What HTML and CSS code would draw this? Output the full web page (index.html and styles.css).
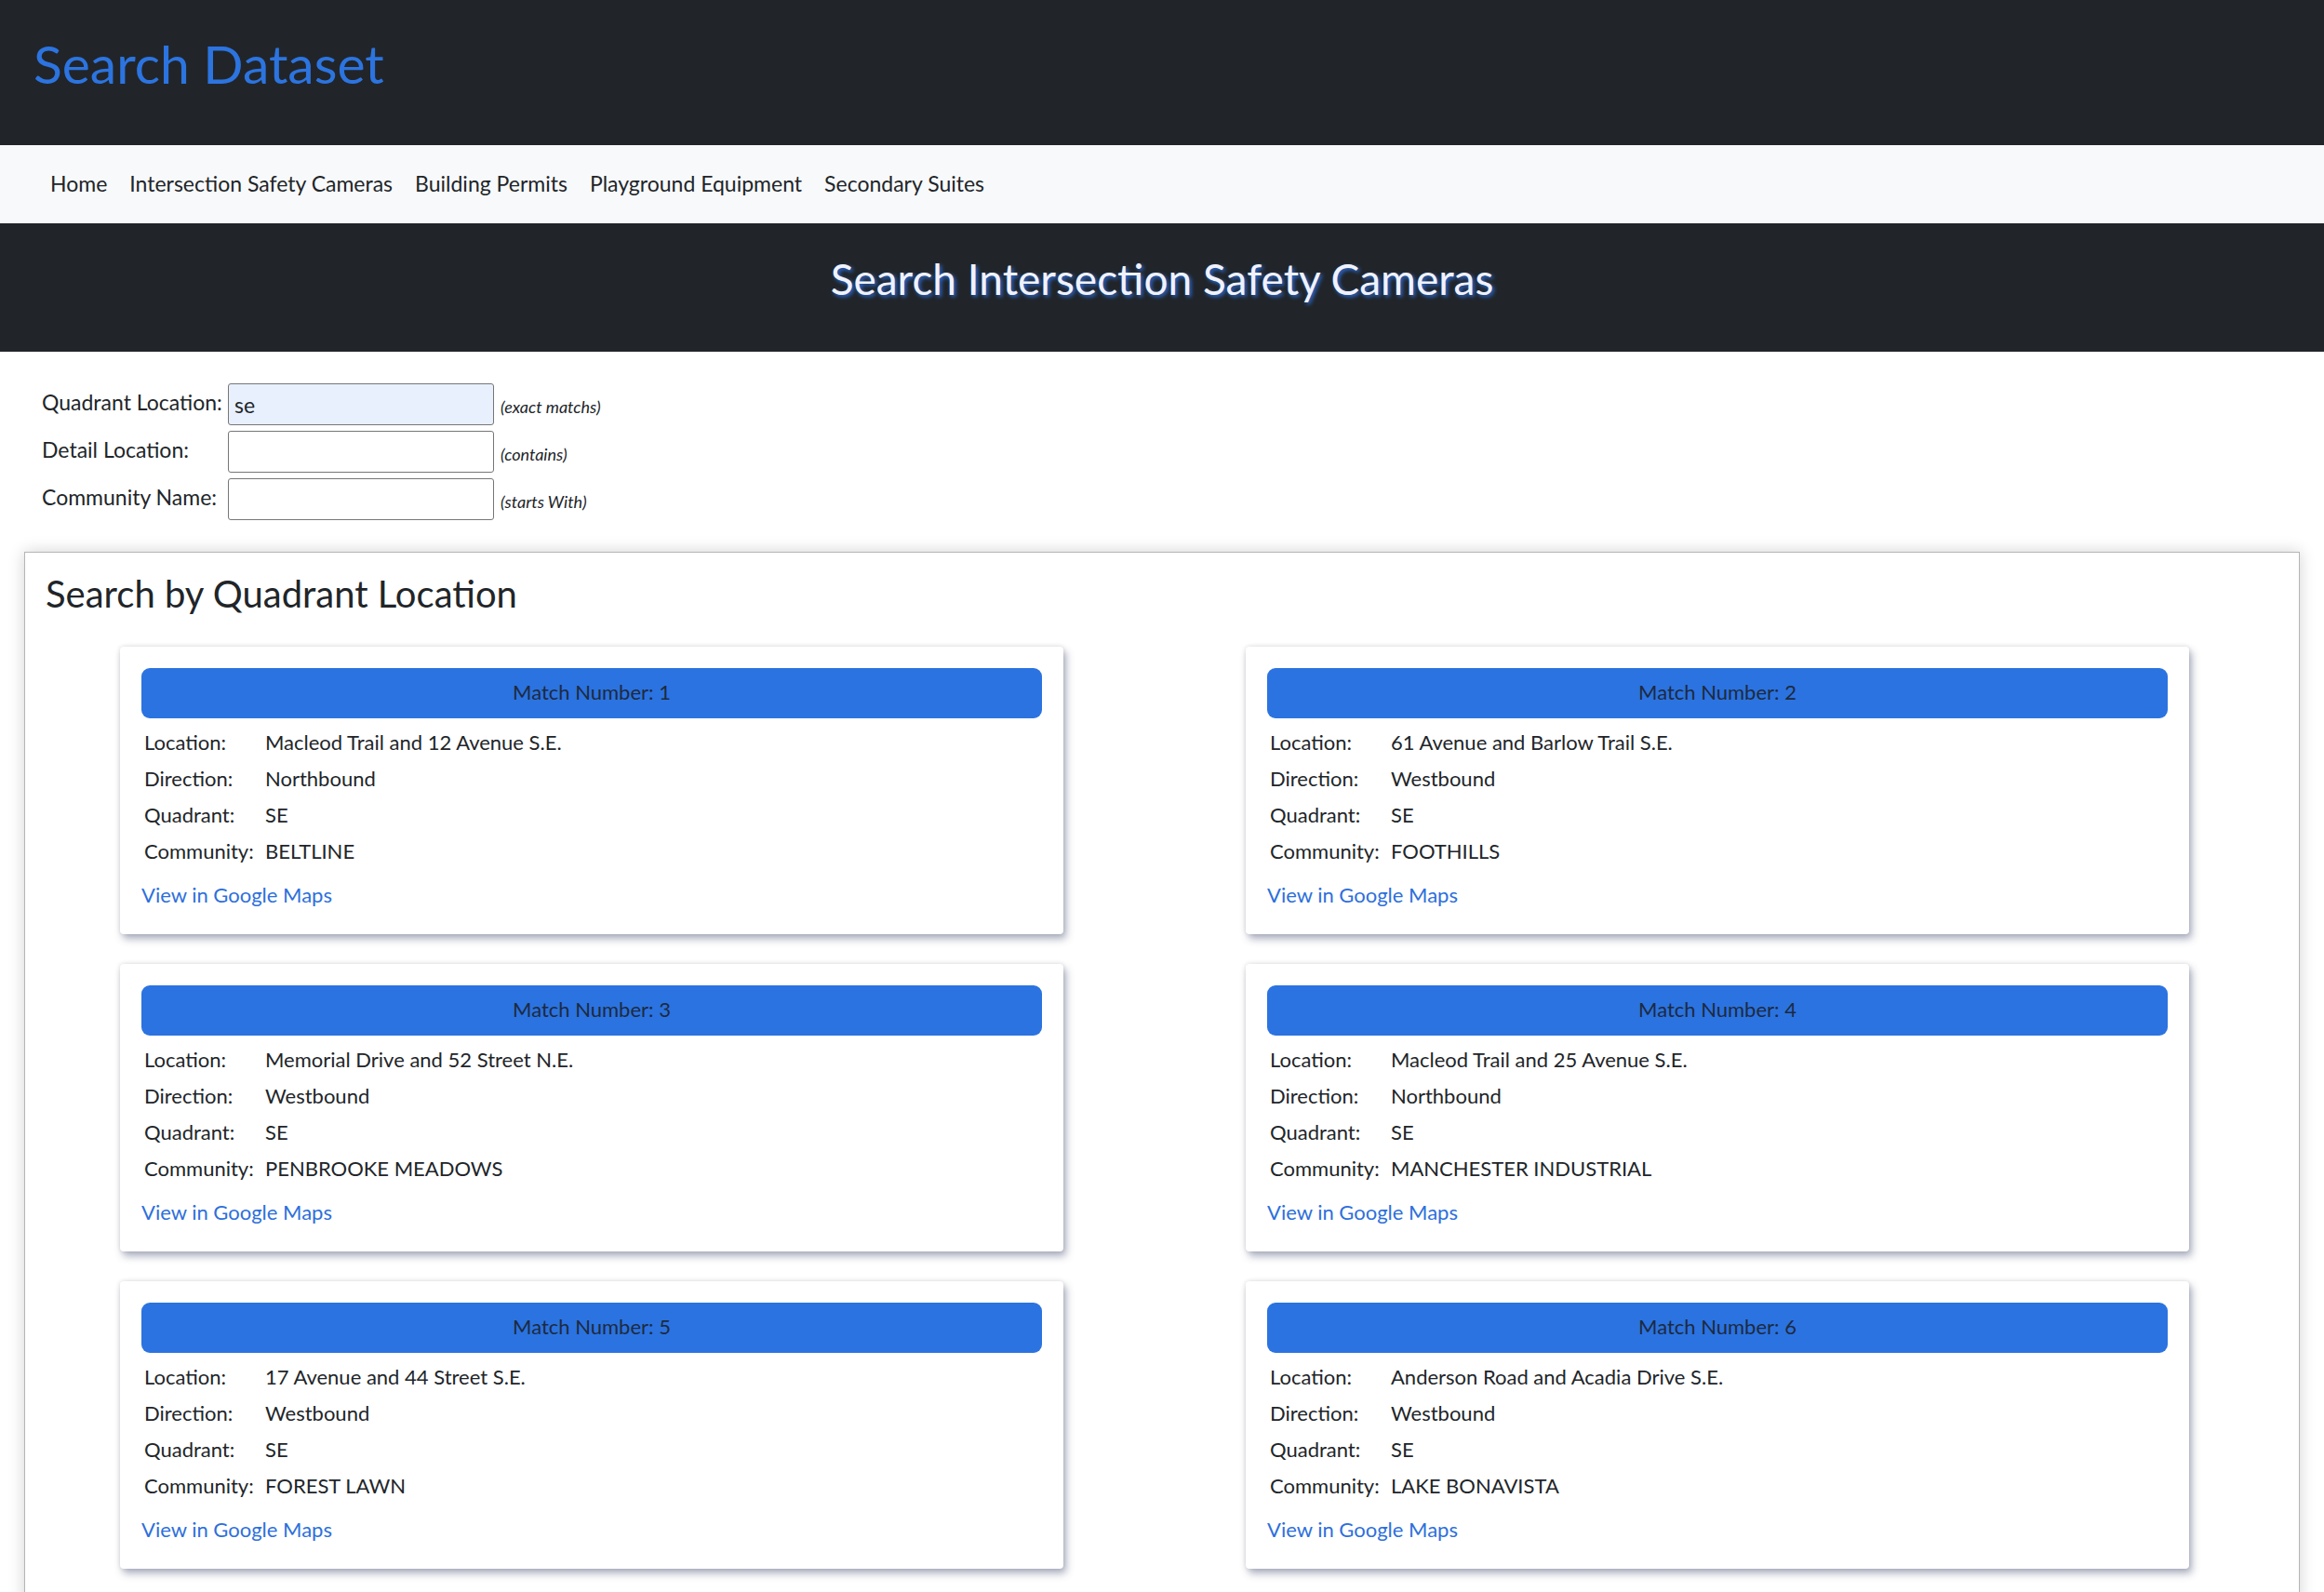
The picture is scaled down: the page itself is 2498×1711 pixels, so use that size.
FILE: index.html
```html
<!DOCTYPE html>
<html lang="en">
<head>
<meta charset="utf-8">
<title>Search Dataset</title>
<link rel="stylesheet" href="styles.css">
</head>
<body>
<header class="top">
  <h1 class="brand">Search Dataset</h1>
</header>
<nav class="navbar">
  <a class="nav-link" href="#">Home</a>
  <a class="nav-link" href="#">Intersection Safety Cameras</a>
  <a class="nav-link" href="#">Building Permits</a>
  <a class="nav-link" href="#">Playground Equipment</a>
  <a class="nav-link" href="#">Secondary Suites</a>
</nav>
<section class="band">
  <h2 class="band-title">Search Intersection Safety Cameras</h2>
</section>
<form class="search-form">
  <label class="form-label" for="q">Quadrant Location:</label>
  <input class="form-input filled" id="q" type="text" value="se">
  <span class="hint">(exact matchs)</span>
  <label class="form-label" for="d">Detail Location:</label>
  <input class="form-input" id="d" type="text">
  <span class="hint">(contains)</span>
  <label class="form-label" for="c">Community Name:</label>
  <input class="form-input" id="c" type="text">
  <span class="hint">(starts With)</span>
</form>
<main class="results">
  <h3 class="results-title">Search by Quadrant Location</h3>
  <div class="grid">
    <div class="card">
      <div class="card-bar">Match Number: 1</div>
      <div class="info"><span>Location:</span><span>Macleod Trail and 12 Avenue S.E.</span><span>Direction:</span><span>Northbound</span><span>Quadrant:</span><span>SE</span><span>Community:</span><span>BELTLINE</span></div>
      <a class="map-link" href="#">View in Google Maps</a>
    </div>
    <div class="card">
      <div class="card-bar">Match Number: 2</div>
      <div class="info"><span>Location:</span><span>61 Avenue and Barlow Trail S.E.</span><span>Direction:</span><span>Westbound</span><span>Quadrant:</span><span>SE</span><span>Community:</span><span>FOOTHILLS</span></div>
      <a class="map-link" href="#">View in Google Maps</a>
    </div>
    <div class="card">
      <div class="card-bar">Match Number: 3</div>
      <div class="info"><span>Location:</span><span>Memorial Drive and 52 Street N.E.</span><span>Direction:</span><span>Westbound</span><span>Quadrant:</span><span>SE</span><span>Community:</span><span>PENBROOKE MEADOWS</span></div>
      <a class="map-link" href="#">View in Google Maps</a>
    </div>
    <div class="card">
      <div class="card-bar">Match Number: 4</div>
      <div class="info"><span>Location:</span><span>Macleod Trail and 25 Avenue S.E.</span><span>Direction:</span><span>Northbound</span><span>Quadrant:</span><span>SE</span><span>Community:</span><span>MANCHESTER INDUSTRIAL</span></div>
      <a class="map-link" href="#">View in Google Maps</a>
    </div>
    <div class="card">
      <div class="card-bar">Match Number: 5</div>
      <div class="info"><span>Location:</span><span>17 Avenue and 44 Street S.E.</span><span>Direction:</span><span>Westbound</span><span>Quadrant:</span><span>SE</span><span>Community:</span><span>FOREST LAWN</span></div>
      <a class="map-link" href="#">View in Google Maps</a>
    </div>
    <div class="card">
      <div class="card-bar">Match Number: 6</div>
      <div class="info"><span>Location:</span><span>Anderson Road and Acadia Drive S.E.</span><span>Direction:</span><span>Westbound</span><span>Quadrant:</span><span>SE</span><span>Community:</span><span>LAKE BONAVISTA</span></div>
      <a class="map-link" href="#">View in Google Maps</a>
    </div>
  </div>
</main>
</body>
</html>
```
FILE: styles.css
```css
* { box-sizing: border-box; }
body {
  margin: 0;
  font-family: Lato, "Noto Sans", sans-serif;
  font-size: 22px;
  color: #212529;
  background: #fff;
}
.top {
  background: #212529;
  height: 156px;
  padding: 40px 0 0 36px;
}
.brand {
  margin: 0;
  font-size: 57px;
  font-weight: 400;
  line-height: 57px;
  color: #2c74e0;
}
.navbar {
  background: #f8f9fa;
  height: 84px;
  display: flex;
  align-items: center;
  padding: 0 0 3px 42px;
}
.nav-link {
  color: #212529;
  text-decoration: none;
  padding: 0 12px;
  font-size: 23px;
  line-height: 36px;
}
.band {
  background: #212529;
  height: 138px;
  padding-top: 32px;
}
.band-title {
  margin: 0;
  text-align: center;
  font-size: 46px;
  font-weight: 400;
  line-height: 1.2;
  color: #f0f2fb;
  text-shadow: 2px 2px 4px #2a6fe0;
}
.search-form {
  display: grid;
  grid-template-columns: 200px 286px auto;
  row-gap: 6px;
  align-items: center;
  margin: 34px 0 0 45px;
  font-size: 23px;
}
.form-label { line-height: 36px; margin-bottom: 5px; }
.form-input {
  width: 286px;
  height: 45px;
  border: 1px solid #767676;
  border-radius: 3px;
  padding: 0 6px;
  font: inherit;
  color: #212529;
  background: #fff;
}
.form-input.filled { background: #e8f0fe; }
.hint {
  font-size: 18px;
  font-style: italic;
  margin-left: 7px;
  padding-top: 5px;
}
.results {
  margin: 34px 26px 0;
  border: 1px solid #b5b5b5;
  box-shadow: 0 0 16px rgba(0, 0, 0, 0.18);
  padding: 20px 0 40px 0;
  background: #fff;
}
.results-title {
  margin: 0 0 33px 22px;
  font-size: 40px;
  font-weight: 400;
  line-height: 1.2;
}
.grid {
  display: grid;
  grid-template-columns: 1014px 1014px;
  column-gap: 196px;
  row-gap: 32px;
  padding-left: 102px;
}
.card {
  background: #fff;
  border-radius: 4px;
  padding: 23px 23px 24px;
  box-shadow: 3px 5px 8px rgba(70, 80, 115, 0.45), 0 0 5px rgba(0, 0, 0, 0.12);
}
.card-bar {
  height: 54px;
  border-radius: 9px;
  background: #2b73e0;
  display: flex;
  align-items: center;
  justify-content: center;
  padding-bottom: 3px;
  color: #1d2a40;
}
.info {
  display: grid;
  grid-template-columns: 130px auto;
  margin-top: 6px;
  padding-left: 3px;
  line-height: 39px;
}
.map-link {
  display: block;
  margin-top: 10px;
  line-height: 36px;
  color: #2d6fdc;
  text-decoration: none;
}
```
